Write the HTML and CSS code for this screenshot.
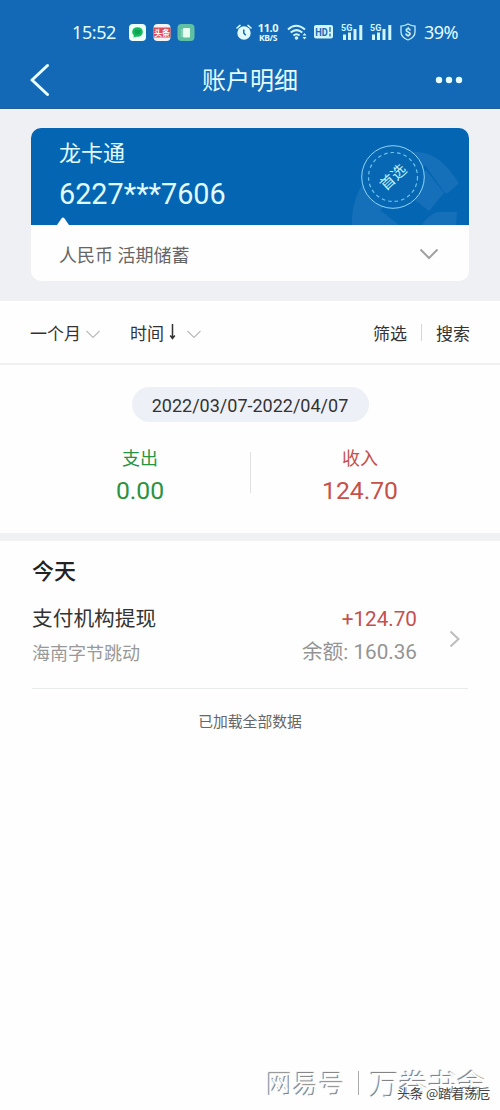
FILE: index.html
```html
<!DOCTYPE html>
<html lang="zh-CN">
<head>
<meta charset="utf-8">
<title>账户明细</title>
<link rel="stylesheet" href="styles.css">
</head>
<body>
<div class="screen">
  <header class="header">
    <div class="status">
      <span class="clock">15:52</span>
      <svg class="apps" width="66" height="17" viewBox="0 0 66 17">
        <rect width="17" height="17" rx="4" fill="#effff8"/>
        <ellipse cx="8.5" cy="8" rx="5.3" ry="4.8" fill="#12b85d"/><path d="M5 11l-.5 2.8L8 12z" fill="#12b85d"/>
        <path d="M5.8 7h5.4M6.3 9h4.4" stroke="#087b45" stroke-width=".8"/>
        <rect x="24.500" width="17" height="17" rx="4" fill="#f6f3f5"/>
        <rect x="24.500" y="3.500" width="17" height="10" fill="#dc4a55"/>
        <text x="33" y="11.500" class="app-name">头条</text>
        <rect x="48.500" width="17" height="17" rx="4" fill="#5fc0a3"/>
        <rect x="54" y="4" width="7" height="9.500" rx="1" fill="#e9fff0"/><path d="M53 5v8" stroke="#a4e5c4"/>
      </svg>
      <svg class="alarm" width="16" height="17" viewBox="0 0 16 17">
        <circle cx="8" cy="9" r="6.700" fill="#dffbff"/>
        <path d="M1 4l3-2.600M15 4l-3-2.600" stroke="#dffbff" stroke-width="1.600" stroke-linecap="round"/>
        <path d="M7.800 5.500V9.200l2 2" fill="none" stroke="#1569b5" stroke-width="1.500"/>
      </svg>
      <span class="speed"><span>11.0</span><span class="unit">KB/S</span></span>
      <svg class="wifi" width="21" height="17" viewBox="0 0 21 17">
        <g fill="none" stroke="#cff5ff" stroke-width="2"><path d="M1 5.400Q9 -2 18 5.400M3.700 8.600Q9.500 3.600 15.300 8.600M6.400 11.500Q9.500 9 12.600 11.500"/></g>
        <circle cx="9.500" cy="14" r="1.800" fill="#cff5ff"/>
        <path d="M15.500 11.500l2-2.500 2 2.500zM15.500 13l2 2.500 2-2.500z" fill="#cff5ff"/>
      </svg>
      <svg class="hd" width="19" height="14" viewBox="0 0 19 14">
        <rect width="19" height="13.500" rx="2" fill="#cff5ff"/>
        <text x="1.300" y="10.500" class="hd-text" textLength="12.500" lengthAdjust="spacingAndGlyphs">HD</text>
        <path d="M16 2v5M16 8.500v3" stroke="#1569b5" stroke-width="1.300"/>
      </svg>
      <svg class="signal" width="22" height="18" viewBox="0 0 22 18">
        <text x="0" y="8" class="net">5G</text>
        <path d="M3.500 11.500v5.500M8.500 9.500V17M14 6V17M19.800 2V17" stroke="#cff5ff" stroke-width="3"/>
      </svg>
      <svg class="signal second" width="22" height="18" viewBox="0 0 22 18">
        <text x="0" y="8" class="net">5G</text>
        <path d="M3.500 11.500v5.500M8.500 9.500V17M14 6V17M19.800 2V17" stroke="#cff5ff" stroke-width="3"/>
      </svg>
      <svg class="shield" width="16" height="18" viewBox="0 0 16 18">
        <path d="M8 1Q11.500 3 15 3.200V9Q15 14.300 8 17Q1 14.300 1 9V3.200Q4.500 3 8 1Z" fill="none" stroke="#bdeeff" stroke-width="1.300"/>
        <text x="8" y="12.800" class="dollar">$</text>
      </svg>
      <span class="battery">39%</span>
    </div>
    <nav class="titlebar">
      <svg width="20" height="34" viewBox="0 0 20 34"><path d="M17.500 2.500L2 17L17.500 31.500" fill="none" stroke="#e9ffff" stroke-width="3" stroke-linecap="round" stroke-linejoin="round"/></svg>
      <h1>账户明细</h1>
      <svg width="28" height="8" viewBox="0 0 28 8" fill="#e9ffff"><circle cx="4" cy="4" r="3.200"/><circle cx="14" cy="4" r="3.200"/><circle cx="24" cy="4" r="3.200"/></svg>
    </nav>
  </header>

  <section class="account">
    <div class="card">
      <div class="card-top">
        <svg class="emblem" width="120" height="97" viewBox="0 0 120 97">
          <g fill="#1670b9">
            <path d="M3 97C2 58 30 24 66 24C84 24 96 34 109 54Q110 56 108 57L99 65Q97 66 95 64L76 37L58 66L51 66L31 82L50 97Z"/>
            <path d="M60 67L80 83L95 65L77 42Z"/>
            <path d="M88 84H108L107 97H73Q78 88 88 84Z"/>
          </g>
        </svg>
        <div class="card-name">龙卡通</div>
        <div class="card-number">6227***7606</div>
        <svg class="stamp" width="66" height="66" viewBox="0 0 66 66">
          <circle cx="33" cy="33" r="31.300" fill="#0767b3" stroke="#8dd5fa"/>
          <circle cx="33" cy="33" r="24.500" fill="none" stroke="#6bc3f2" stroke-width="1.200" stroke-dasharray="3.600 3"/>
          <text x="33" y="38.500" transform="rotate(-43 33 33)" class="stamp-text">首选</text>
        </svg>
        <svg class="notch" width="12" height="8" viewBox="0 0 12 8"><path d="M0 8L4.500 1.500Q6 -.5 7.500 1.500L12 8Z" fill="#fff"/></svg>
      </div>
      <div class="card-type"><span>人民币 活期储蓄</span>
        <svg width="20" height="12" viewBox="0 0 20 12"><path d="M1.500 1.500L10 10L18.500 1.500" fill="none" stroke="#a1a1a3" stroke-width="2"/></svg>
      </div>
    </div>
  </section>

  <div class="filters">
    <span>一个月</span>
    <svg class="chev" width="14" height="9" viewBox="0 0 14 9"><path d="M.5 1L7 7.500L13.500 1" fill="none" stroke="#b9b9b9" stroke-width="1.100"/></svg>
    <span class="time">时间</span>
    <svg class="arrow" width="7" height="16" viewBox="0 0 7 16"><path d="M3.500 0V14M1.200 11.500L3.500 14.500L5.800 11.500" fill="none" stroke="#333" stroke-width="1.500"/></svg>
    <svg class="chev far" width="14" height="9" viewBox="0 0 14 9"><path d="M.5 1L7 7.500L13.500 1" fill="none" stroke="#b9b9b9" stroke-width="1.100"/></svg>
    <span class="pick">筛选</span><i class="bar"></i><span>搜索</span>
  </div>

  <section class="summary">
    <div class="range">2022/03/07-2022/04/07</div>
    <div class="totals">
      <div class="total out"><span>支出</span><strong>0.00</strong></div>
      <i class="rule"></i>
      <div class="total in"><span>收入</span><strong>124.70</strong></div>
    </div>
  </section>

  <main class="list">
    <h2>今天</h2>
    <div class="entry">
      <div class="desc"><span class="what">支付机构提现</span><span class="who">海南字节跳动</span></div>
      <div class="sums"><span class="plus">+124.70</span><span class="left">余额: 160.36</span></div>
      <svg class="next" width="11" height="18" viewBox="0 0 11 18"><path d="M1.500 1.500L9.500 9L1.500 16.500" fill="none" stroke="#bdbdbd" stroke-width="2"/></svg>
    </div>
    <p class="end">已加载全部数据</p>
  </main>

  <div class="mark"><span>网易号</span><i class="mark-bar"></i><span class="mark-name">万卷书舍</span></div>
  <div class="credit">头条 @踏着荡卮</div>
</div>
</body>
</html>
```
FILE: styles.css
```css
* { box-sizing: border-box; }
body { margin: 0; font-family: Roboto, "Noto Sans CJK SC", sans-serif; background: #fefefe; }
svg { display: block; flex: none; }
h1, h2, p { margin: 0; font-weight: 400; }
.screen { position: relative; width: 500px; height: 1110px; overflow: hidden; background: #fefefe; }

.header { height: 109px; background: #1369b5; border-bottom: 1px solid #255f91; color: #e4fcff; }
.status { display: flex; align-items: center; height: 51px; padding: 13px 0 0 72px; }
.clock { width: 57px; font: 18px/20px "Noto Sans", sans-serif; letter-spacing: -.4px; }
.app-name { font: 700 8px "Noto Sans CJK SC", sans-serif; fill: #fff; text-anchor: middle; }
.alarm { margin-left: 41px; }
.speed { display: flex; flex-direction: column; align-items: center; width: 22px; margin-left: 5px; font: 700 11px/11px "Noto Sans", sans-serif; letter-spacing: -.4px; }
.unit { font-size: 8.500px; line-height: 9px; }
.wifi { margin-left: 8px; }
.hd { margin-left: 6px; }
.hd-text { font: 700 10px Roboto, sans-serif; fill: #1569b5; }
.signal { margin-left: 8px; }
.second { margin-left: 7px; }
.net { font: 700 9px Roboto, sans-serif; fill: #cff5ff; }
.shield { margin-left: 8px; }
.dollar { font: 700 11px Roboto, sans-serif; fill: #cff5ff; text-anchor: middle; }
.battery { margin-left: 8px; font: 18px/20px "Noto Sans", sans-serif; letter-spacing: -.6px; }
.titlebar { display: flex; align-items: center; justify-content: space-between; height: 57px; padding: 0 37px 0 30px; }
.titlebar h1 { font-size: 24px; line-height: 32px; margin: 3px 0 0 15px; }

.account { height: 192px; padding: 19px 31px 0; background: #eff0f4; }
.card { height: 153px; border-radius: 10px; overflow: hidden; background: #fefefe; }
.card-top { position: relative; height: 97px; padding: 11px 28px; background: #0465b3; color: #e0fbff; }
.card-name { font-size: 22px; line-height: 30px; }
.card-number { font-size: 28.800px; line-height: 34px; margin-top: 8px; }
.emblem { position: absolute; right: 0; top: 0; }
.stamp { position: absolute; left: 329px; top: 16px; }
.stamp-text { font: 15px "Noto Sans CJK SC", sans-serif; fill: #b8f2fb; text-anchor: middle; }
.notch { position: absolute; left: 26px; bottom: 0; }
.card-type { display: flex; align-items: center; justify-content: space-between; height: 57px; padding: 0 30px 0 28px; color: #666; font-size: 18px; }

.filters { display: flex; align-items: center; height: 64px; padding: 0 30px; border-bottom: 2px solid #f1f1f2; color: #333; font-size: 17px; }
.chev { margin: 4px 0 0 5px; }
.time { margin-left: 30px; }
.arrow { margin-left: 5px; }
.far { margin-left: 11px; }
.pick { margin-left: auto; }
.bar { width: 1px; height: 17px; margin: 0 14px; background: #d5d5d5; }

.summary { height: 176px; padding-top: 22px; border-bottom: 8px solid #eff1f3; }
.range { width: 237px; height: 35px; margin: 0 auto; border-radius: 18px; background: #eef0f7; color: #333; font-size: 18px; line-height: 37px; text-align: center; }
.totals { display: flex; justify-content: space-between; padding: 22px 85px 0 85px; }
.total { display: flex; flex-direction: column; align-items: center; width: 110px; padding-top: 2px; font-size: 18px; line-height: 26px; }
.total strong { font-size: 24.700px; line-height: 30px; font-weight: 400; margin-top: 4px; }
.out { color: #279344; }
.in { color: #c5514b; }
.rule { width: 1px; height: 41px; margin-top: 8px; background: #e1e1e1; }

.list { padding: 15px 32px 0; }
.list h2 { color: #222; font-size: 22px; line-height: 32px; font-weight: 500; }
.entry { display: flex; height: 101px; border-bottom: 1px solid #e9ebeb; padding-top: 16px; }
.desc, .sums { display: flex; flex-direction: column; }
.what { color: #333; font-size: 20.700px; line-height: 30px; }
.who { color: #999; font-size: 18px; line-height: 28px; margin-top: 6px; }
.sums { margin-left: auto; align-items: flex-end; font-size: 20.700px; line-height: 30px; }
.plus { color: #c5504e; }
.left { color: #949494; margin-top: 3px; }
.next { margin: 26px 8px 0 32px; }
.end { margin-top: 21px; color: #666; font-size: 14.800px; line-height: 24px; text-align: center; }

.mark { position: absolute; left: 267px; top: 1064px; display: flex; align-items: center; color: #fff; font: 26px/38px "Noto Sans CJK SC", sans-serif; text-shadow: -1px -1px 1px #777; white-space: nowrap; }
.mark-name { font-size: 29px; }
.mark-bar { width: 1px; height: 24px; margin: 0 11px 0 13px; background: #aaa; }
.credit { position: absolute; left: 397px; top: 1083px; color: #444; font: 13px/20px "Noto Sans CJK SC", sans-serif; text-shadow: 0 0 2px #fff; white-space: nowrap; }
```
